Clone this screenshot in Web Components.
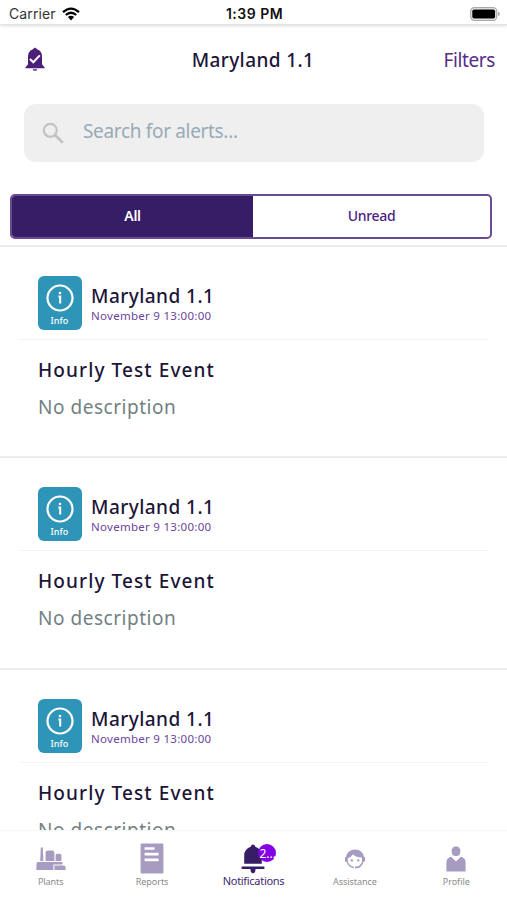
<!DOCTYPE html>
<html lang="en">
<head>
<meta charset="utf-8">
<meta name="viewport" content="width=device-width, initial-scale=1">
<title>Notifications</title>
<style>
    html, body {
        margin: 0;
        height: 100%;
        overflow: hidden;
        background: #fff;
        font-family: "Noto Sans", "Open Sans", sans-serif;
    }
</style>
</head>
<body>
<alerts-app></alerts-app>

<script>
/**
 * Small helper: every component renders its template once into an open shadow root
 */
class BaseElement extends HTMLElement {
    constructor() {
        super();
        this.attachShadow({ mode: 'open' });
    }

    connectedCallback() {
        this.shadowRoot.innerHTML = this.template();
    }
}

// iOS status bar: carrier, clock, battery
class StatusBar extends BaseElement {
    template() {
        return `
            <style>
                :host {
                    display: grid;
                    grid-template-columns: 1fr auto 1fr;
                    align-items: center;
                    flex: none;
                    height: 25px;
                    box-sizing: border-box;
                    padding: 3px 7px 0 9px;
                    border-bottom: 1px solid #e4e4e4;
                    box-shadow: 0 1px 3px rgba(0, 0, 0, 0.14);
                    font-family: Inter, "Liberation Sans", sans-serif;
                    font-size: 14px;
                    line-height: 20px;
                    color: #111;
                }
                .left { display: flex; align-items: center; gap: 6px; }
                .carrier { color: #333; letter-spacing: 0.1px; }
                .clock { font-weight: 600; letter-spacing: 0.5px; }
                .battery { justify-self: end; }
                svg { display: block; }
            </style>
            <div class="left">
                <span class="carrier">Carrier</span>
                <svg width="18" height="14" viewBox="0 0 18 14">
                    <path d="M1 5.2Q9 -2 17 5.2M3.8 8Q9 3.4 14.2 8" fill="none" stroke="#000" stroke-width="2.3"/>
                    <path d="M5.9 10.1Q9 7.6 12.1 10.1L9 13.4Z"/>
                </svg>
            </div>
            <span class="clock">1:39 PM</span>
            <svg class="battery" width="30" height="14" viewBox="0 0 30 14">
                <rect x="0.7" y="0.7" width="26" height="12.6" rx="3.6" fill="#eee" stroke="#aaa" stroke-width="1.2"/>
                <rect x="2.3" y="2.4" width="22.8" height="9.2" rx="1.8"/>
                <path d="M28 4.8Q29.8 5.4 29.8 7T28 9.2Z" fill="#aaa"/>
            </svg>
        `;
    }
}

class AppHeader extends BaseElement {
    template() {
        return `
            <style>
                :host {
                    display: grid;
                    grid-template-columns: 1fr auto 1fr;
                    align-items: center;
                    flex: none;
                    height: 69px;
                    box-sizing: border-box;
                    padding: 0 12px 0 25px;
                }
                svg { display: block; margin-top: -1px; }
                .title {
                    margin-right: 14px;
                    font-size: 19px;
                    font-weight: 500;
                    line-height: 28px;
                    color: #1c1538;
                    letter-spacing: 0.4px;
                }
                .action {
                    justify-self: end;
                    font-size: 19px;
                    line-height: 28px;
                    color: #552d87;
                    letter-spacing: -0.4px;
                }
            </style>
            <svg width="20" height="24" viewBox="0 0 20 24">
                <path d="M10 0.5L12.6 2.5Q17 4.3 17 9.5V17.2L19.6 20.4V21.3H0.4V20.4L3 17.2V9.5Q3 4.3 7.4 2.5Z" fill="#4c1f7a"/>
                <path d="M7.6 22.3H12.4Q12 23.8 10 23.8T7.6 22.3Z" fill="#4c1f7a"/>
                <path d="M5 12L8.3 15.3L14.8 8.4" fill="none" stroke="#fff" stroke-width="2"/>
            </svg>
            <span class="title"><slot></slot></span>
            <span class="action">Filters</span>
        `;
    }
}

class SearchField extends BaseElement {
    template() {
        return `
            <style>
                :host {
                    display: flex;
                    align-items: center;
                    flex: none;
                    height: 58px;
                    box-sizing: border-box;
                    margin: 10px 23px 0 24px;
                    padding: 0 18px;
                    gap: 19px;
                    border-radius: 12px;
                    background: #efefef;
                }
                svg { display: block; margin-top: -1px; }
                span {
                    font-size: 19px;
                    line-height: 28px;
                    margin-top: -5px;
                    color: #98aab6;
                    letter-spacing: -0.33px;
                }
            </style>
            <svg width="22" height="22" viewBox="0 0 22 22" fill="none" stroke="#c3c3c3">
                <circle cx="8.3" cy="8.3" r="6.5" stroke-width="2.3"/>
                <path d="M13.2 13.2L20.8 20.8" stroke-width="3"/>
            </svg>
            <span><slot></slot></span>
        `;
    }
}

class SegmentedTabs extends BaseElement {
    template() {
        return `
            <style>
                :host {
                    display: grid;
                    grid-template-columns: 241px 1fr;
                    flex: none;
                    height: 45px;
                    box-sizing: border-box;
                    margin: 32px 15px 6px 10px;
                    border: 2px solid #6b4a94;
                    border-radius: 5px;
                    overflow: hidden;
                }
                div {
                    display: flex;
                    align-items: center;
                    justify-content: center;
                    font-size: 14px;
                    font-weight: 500;
                    line-height: 20px;
                    letter-spacing: -0.3px;
                    color: #4d2383;
                    padding-bottom: 1px;
                }
                .active { background: #371c66; color: #fff; font-weight: 600; }
            </style>
            <div class="active">All</div>
            <div>Unread</div>
        `;
    }
}

class InfoBadge extends BaseElement {
    template() {
        return `
            <style>
                :host {
                    display: flex;
                    flex-direction: column;
                    align-items: center;
                    width: 44px;
                    height: 54px;
                    box-sizing: border-box;
                    padding-top: 8px;
                    border-radius: 6px;
                    background: #2f95b8;
                    color: #fff;
                    font-size: 9px;
                    font-weight: 500;
                    line-height: 12px;
                    letter-spacing: 0.1px;
                }
                svg { display: block; margin-bottom: 3px; }
            </style>
            <svg width="28" height="28" viewBox="0 0 28 28">
                <circle cx="14" cy="14" r="12.5" fill="none" stroke="#fff" stroke-width="2.2"/>
                <circle cx="14" cy="9" r="1.3" fill="#fff"/>
                <path d="M12.4 12.6H14.2V19.6" fill="none" stroke="#fff" stroke-width="2"/>
            </svg>
            <span>Info</span>
        `;
    }
}

class AlertCard extends BaseElement {
    template() {
        return `
            <style>
                :host {
                    display: block;
                    flex: none;
                    height: 211.4px;
                    box-sizing: border-box;
                    border-top: 2px solid #ededed;
                }
                .head {
                    display: flex;
                    gap: 9.5px;
                    height: 93px;
                    box-sizing: border-box;
                    margin: 0 19px 0 20px;
                    padding: 29px 0 0 17.5px;
                    border-bottom: 1px solid #f3f3f3;
                }
                .plant {
                    margin-top: 7px;
                    font-size: 19px;
                    font-weight: 500;
                    line-height: 26px;
                    color: #1c1538;
                    letter-spacing: 0.45px;
                }
                .date {
                    font-size: 11.5px;
                    line-height: 14px;
                    color: #6c459c;
                    letter-spacing: 0.28px;
                }
                .body { padding: 16px 38px 0; }
                .event {
                    font-size: 19px;
                    font-weight: 500;
                    line-height: 28px;
                    color: #1c1538;
                    letter-spacing: 1.1px;
                }
                .description {
                    margin-top: 9px;
                    font-size: 19px;
                    line-height: 28px;
                    color: #727f83;
                    letter-spacing: 0.53px;
                }
            </style>
            <div class="head">
                <info-badge></info-badge>
                <div>
                    <div class="plant"><slot name="plant"></slot></div>
                    <div class="date"><slot name="date"></slot></div>
                </div>
            </div>
            <div class="body">
                <div class="event"><slot name="event"></slot></div>
                <div class="description"><slot name="description"></slot></div>
            </div>
        `;
    }
}

class NavItem extends BaseElement {
    template() {
        return `
            <style>
                :host {
                    display: flex;
                    flex-direction: column;
                    align-items: center;
                    padding-top: 11px;
                    font-size: 9px;
                    line-height: 14px;
                    letter-spacing: -0.05px;
                    color: #8b8b8b;
                }
                :host([active]) {
                    font-size: 11px;
                    letter-spacing: -0.3px;
                    color: #43296f;
                }
                .icon {
                    display: flex;
                    align-items: center;
                    justify-content: center;
                    height: 33px;
                }
                :host([active]) .label { margin-top: -1px; }
            </style>
            <div class="icon"><slot name="icon"></slot></div>
            <div class="label"><slot></slot></div>
        `;
    }
}

class BottomNav extends BaseElement {
    template() {
        return `
            <style>
                :host {
                    display: grid;
                    grid-template-columns: repeat(5, 1fr);
                    flex: none;
                    height: 69px;
                    background: #fff;
                    border-top: 1px solid #f6f6f6;
                }
                svg { display: block; fill: #a79bc1; }
                .bell { position: relative; }
                .bell svg { fill: #371c66; }
                .count {
                    position: absolute;
                    left: 17px;
                    top: 0;
                    width: 18px;
                    height: 18px;
                    border-radius: 50%;
                    background: #8200e6;
                    color: #fff;
                    font-size: 12px;
                    line-height: 19px;
                    letter-spacing: 0;
                    text-indent: 1px;
                }
            </style>
            <nav-item>
                <svg slot="icon" width="30" height="24" viewBox="0 0 30 24">
                    <path d="M4.8 0.6H6.8L7.4 14H4.2ZM9.6 14V5.6Q9.6 3.4 12 3.4H16Q18.4 3.4 18.4 5.6V14ZM19.6 14V8.4Q19.6 6.8 21.2 6.8H23.8Q25.4 6.8 25.4 8.4V14Z"/>
                    <path d="M1.4 15H26.4V17.4H17.4V23H0.4V17Z"/>
                    <path d="M18.4 18.4H28.4L29.6 20V23H18.4Z"/>
                </svg>
                Plants
            </nav-item>
            <nav-item>
                <svg slot="icon" width="24" height="31" viewBox="0 0 24 31">
                    <path fill-rule="evenodd" d="M1.5 0.6H22.5Q23.4 0.6 23.4 1.5V29.5Q23.4 30.4 22.5 30.4H1.5Q0.6 30.4 0.6 29.5V1.5Q0.6 0.6 1.5 0.6ZM4.6 4.2V6.8H14.6V4.2ZM4.6 9.8V12.4H18.6V9.8ZM4.6 15.6V18.2H18.6V15.6Z"/>
                </svg>
                Reports
            </nav-item>
            <nav-item active>
                <div slot="icon" class="bell">
                    <svg width="24" height="30" viewBox="0 0 24 30">
                        <path d="M12 0.5Q13.6 0.5 14.4 2.8Q20.8 5.2 20.8 11.5V19.8H3.2V11.5Q3.2 5.2 9.6 2.8Q10.4 0.5 12 0.5Z"/>
                        <path d="M0.6 22.4H23.4V25H14.6Q14.4 29.2 12 29.2T9.4 25H0.6Z"/>
                    </svg>
                    <span class="count">2...</span>
                </div>
                Notifications
            </nav-item>
            <nav-item>
                <svg slot="icon" width="22" height="20" viewBox="0 0 22 20">
                    <path d="M1 8H2Q3.5 0.5 11 0.5T20 8H21V12.6H19.6Q18 18.4 13.6 19.2H11V17.4H13.4Q17 16.4 18 12.6V8.4Q12 8.4 9 5.2Q7 8.4 3.8 9.2V12.4Q5.4 17 9.6 17.6V19.3Q4.4 18.4 2.4 12.8H1Z"/>
                    <circle cx="7.8" cy="11.4" r="1.2"/>
                    <circle cx="14.2" cy="11.4" r="1.2"/>
                </svg>
                Assistance
            </nav-item>
            <nav-item>
                <svg slot="icon" width="20" height="26" viewBox="0 0 20 26">
                    <path d="M10 0.4Q14.4 0.4 14.4 5Q14.4 10.2 10 10.2T5.6 5Q5.6 0.4 10 0.4Z"/>
                    <path d="M5.2 10.8L10 15.4L14.8 10.8Q19.6 12 19.6 16V25.4H0.4V16Q0.4 12 5.2 10.8Z"/>
                </svg>
                Profile
            </nav-item>
        `;
    }
}

class AlertsApp extends BaseElement {
    constructor() {
        super();
        this.alerts = Array.from({ length: 3 }, () => ({
            plant: 'Maryland 1.1',
            date: 'November 9 13:00:00',
            event: 'Hourly Test Event',
            description: 'No description'
        }));
    }

    template() {
        const cards = this.alerts.map((alert) => `
            <alert-card>
                <span slot="plant">${alert.plant}</span>
                <span slot="date">${alert.date}</span>
                <span slot="event">${alert.event}</span>
                <span slot="description">${alert.description}</span>
            </alert-card>
        `).join('');

        return `
            <style>
                :host {
                    display: flex;
                    flex-direction: column;
                    height: 100vh;
                    overflow: hidden;
                }
                .list {
                    display: flex;
                    flex-direction: column;
                    flex: 1;
                    min-height: 0;
                    overflow: hidden;
                }
            </style>
            <status-bar></status-bar>
            <app-header>Maryland 1.1</app-header>
            <search-field>Search for alerts...</search-field>
            <segmented-tabs></segmented-tabs>
            <div class="list">${cards}</div>
            <bottom-nav></bottom-nav>
        `;
    }
}

customElements.define('status-bar', StatusBar);
customElements.define('app-header', AppHeader);
customElements.define('search-field', SearchField);
customElements.define('segmented-tabs', SegmentedTabs);
customElements.define('info-badge', InfoBadge);
customElements.define('alert-card', AlertCard);
customElements.define('nav-item', NavItem);
customElements.define('bottom-nav', BottomNav);
customElements.define('alerts-app', AlertsApp);
</script>
</body>
</html>
